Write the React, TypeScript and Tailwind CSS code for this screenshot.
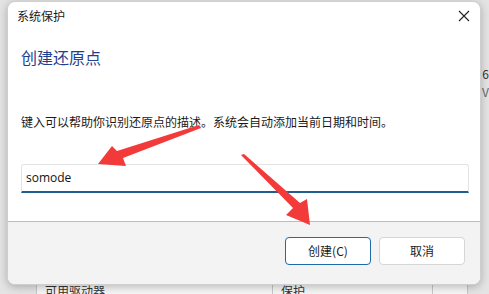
import React from 'react'

const cjk = { fontFamily: '"Noto Sans CJK SC", "Noto Sans", sans-serif' }

function Arrows() {
  return (
    <svg className="pointer-events-none absolute left-0 top-0" width="489" height="294" viewBox="0 0 489 294">
      <polygon
        points="199,125 201,128 123,158 126,166 98,164 112,146 117,151"
        fill="#f23a3a"
      />
      <polygon
        points="241,155 244,154 300,203 307,199 310,225 286,215 293,208"
        fill="#f23a3a"
      />
    </svg>
  )
}

export default function App() {
  return (
    <div className="relative h-[294px] w-[489px] overflow-hidden bg-[#e4e4e4]" style={cjk}>
      {/* window behind the dialog */}
      <div className="absolute bottom-0 left-[36px] flex h-[12px] w-[432px] border-x border-t border-[#c8c8c8] bg-[#f6f6f6] text-[12px] leading-[16px] text-[#333]">
        <div className="w-[236px] border-r border-[#c8c8c8] pl-[8px]">可用驱动器</div>
        <div className="w-[160px] border-r border-[#c8c8c8] pl-[8px]">保护</div>
        <div className="flex-1" />
      </div>
      <div className="absolute right-0 top-[66px] text-[12px] leading-[16px] text-[#333]">6</div>
      <div className="absolute right-0 top-[84px] text-[12px] leading-[16px] text-[#666]">V</div>

      {/* dialog */}
      <div className="absolute left-[7px] top-[1px] flex h-[284px] w-[474px] flex-col overflow-hidden rounded-[8px] border border-[#cfcfcf] bg-white shadow-[0_2px_8px_rgba(0,0,0,0.25)]">
        <div className="flex h-[28px] items-center justify-between pl-[9px] pr-[9px]">
          <span className="text-[12px] text-[#1a1a1a]">系统保护</span>
          <svg width="12" height="12" viewBox="0 0 12 12" className="mr-[1px]">
            <path d="M1 1 L11 11 M11 1 L1 11" stroke="#222" strokeWidth="1.1" fill="none" />
          </svg>
        </div>
        <div className="flex flex-1 flex-col px-[13px]">
          <div className="mt-[16px] text-[16px] leading-[22px] text-[#1f3f8f]">创建还原点</div>
          <div className="mt-[46px] text-[12px] leading-[16px] text-[#1a1a1a]">
            键入可以帮助你识别还原点的描述。系统会自动添加当前日期和时间。
          </div>
          <div className="mt-[34px] flex h-[29px] w-[448px] items-center rounded-t-[3px] border border-b-2 border-[#e3e3e3] border-b-[#1f5f8f] pl-[4px]">
            <span className="text-[12px] text-[#111]" style={{ fontFamily: '"Open Sans", "Noto Sans", sans-serif' }}>
              somode
            </span>
          </div>
        </div>
        <div className="flex h-[63px] items-center justify-end gap-[8px] border-t border-[#bdbdbd] bg-[#f3f3f3] pr-[15px] pb-[4px]">
          <button className="flex h-[28px] w-[86px] items-center justify-center rounded-[4px] border border-[#1f6aa8] bg-white text-[12px] text-[#1a1a1a]">
            创建(C)
          </button>
          <button className="flex h-[28px] w-[86px] items-center justify-center rounded-[4px] border border-[#d6d6d6] bg-white text-[12px] text-[#1a1a1a]">
            取消
          </button>
        </div>
      </div>
      <Arrows />
    </div>
  )
}
